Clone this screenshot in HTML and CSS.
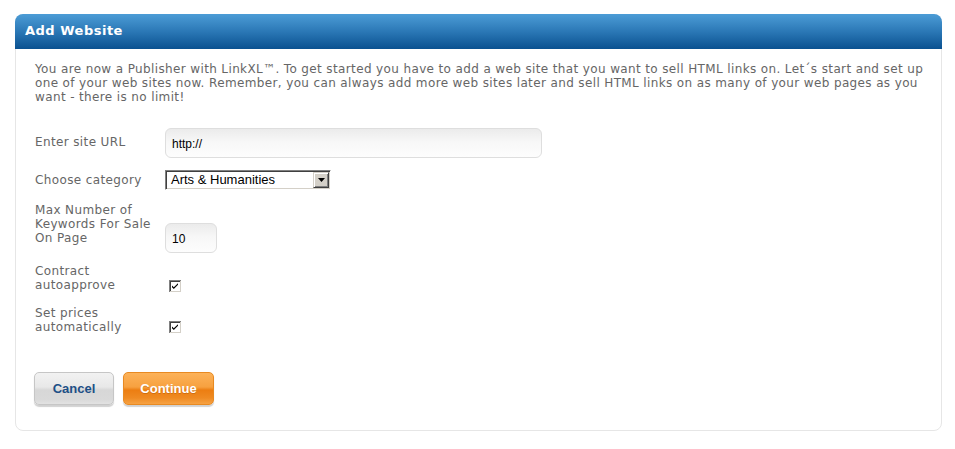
FILE: index.html
```html
<!DOCTYPE html>
<html>
<head>
<meta charset="utf-8">
<title>Add Website</title>
<link rel="stylesheet" href="styles.css">
</head>
<body>
<div class="panel">
  <div class="panel-head">Add Website</div>
  <div class="panel-body">
    <p class="intro">You are now a Publisher with LinkXL™. To get started you have to add a web site that you want to sell HTML links on. Let´s start and set up<br>one of your web sites now. Remember, you can always add more web sites later and sell HTML links on as many of your web pages as you<br>want - there is no limit!</p>
    <form class="form">
      <div class="row row-url">
        <label class="lbl">Enter site URL</label>
        <input class="txt txt-url" type="text" value="http://">
      </div>
      <div class="row row-cat">
        <label class="lbl">Choose category</label>
        <div class="select">
          <span class="select-val">Arts &amp; Humanities</span>
          <span class="select-btn"><svg width="7" height="4" viewBox="0 0 7 4"><path d="M0 0h7L3.5 4z" fill="#000"/></svg></span>
        </div>
      </div>
      <div class="row row-max">
        <label class="lbl">Max Number of<br>Keywords For Sale<br>On Page</label>
        <input class="txt txt-num" type="text" value="10">
      </div>
      <div class="row row-chk1">
        <label class="lbl">Contract<br>autoapprove</label>
        <span class="chk"><svg width="12" height="12" viewBox="0 0 12 12"><rect x="0" y="0" width="12" height="12" fill="#808080"/><rect x="1" y="1" width="11" height="11" fill="#fff"/><rect x="1" y="1" width="10" height="10" fill="#404040"/><rect x="2" y="2" width="9" height="9" fill="#fff"/><rect x="11" y="1" width="1" height="11" fill="#d4d0c8"/><rect x="1" y="11" width="11" height="1" fill="#d4d0c8"/><path d="M3 5.5l1.8 1.8L9 3.2v1.6L4.8 9 3 7.2z" fill="#000"/></svg></span>
      </div>
      <div class="row row-chk2">
        <label class="lbl">Set prices<br>automatically</label>
        <span class="chk"><svg width="12" height="12" viewBox="0 0 12 12"><rect x="0" y="0" width="12" height="12" fill="#808080"/><rect x="1" y="1" width="11" height="11" fill="#fff"/><rect x="1" y="1" width="10" height="10" fill="#404040"/><rect x="2" y="2" width="9" height="9" fill="#fff"/><rect x="11" y="1" width="1" height="11" fill="#d4d0c8"/><rect x="1" y="11" width="11" height="1" fill="#d4d0c8"/><path d="M3 5.5l1.8 1.8L9 3.2v1.6L4.8 9 3 7.2z" fill="#000"/></svg></span>
      </div>
      <div class="actions">
        <button type="button" class="btn btn-cancel">Cancel</button>
        <button type="button" class="btn btn-continue">Continue</button>
      </div>
    </form>
  </div>
</div>
</body>
</html>
```
FILE: styles.css
```css
html, body {
  margin: 0;
  padding: 0;
  background: #fff;
}
body {
  padding: 14px 0 0 15px;
  font-family: "DejaVu Sans", Verdana, sans-serif;
}
.panel {
  width: 925px;
  height: 415px;
  border: 1px solid #e6e6e6;
  border-radius: 8px;
  background: #fff;
}
.panel-head {
  margin: -1px -1px 0 -1px;
  height: 35px;
  border-radius: 8px 8px 0 0;
  background: linear-gradient(#4c9cd6 0%, #2b78b6 50%, #0a5190 100%);
  color: #fff;
  font-weight: bold;
  font-size: 13px;
  letter-spacing: 0.5px;
  line-height: 34px;
  padding-left: 10px;
}
.panel-body {
  padding: 13px 0 0 19px;
}
.intro {
  margin: 0;
  font-size: 12px;
  line-height: 14px;
  letter-spacing: 0.37px;
  color: #666;
  white-space: nowrap;
}
.form {
  margin-top: 24px;
}
.row {
  display: flex;
  align-items: flex-start;
}
.lbl {
  width: 130px;
  font-size: 12px;
  line-height: 14px;
  letter-spacing: 0.37px;
  color: #666;
  white-space: nowrap;
}
.txt {
  box-sizing: border-box;
  height: 30px;
  margin: 0;
  border: 1px solid #dedede;
  border-radius: 6px;
  background: linear-gradient(#ebebeb 0%, #f7f7f7 45%, #fdfdfd 100%);
  font-family: "Liberation Sans", Arial, sans-serif;
  font-size: 12px;
  color: #000;
  padding: 2px 0 0 6px;
  outline: none;
}
.txt-url { width: 377px; }
.txt-num { width: 52px; margin-top: 20px; }
.row-url .lbl { margin-top: 7px; }
.row-cat { margin-top: 12px; }
.row-cat .lbl { margin-top: 3px; }
.select {
  box-sizing: border-box;
  width: 166px;
  height: 20px;
  display: flex;
  align-items: center;
  border-style: solid;
  border-width: 1px;
  border-color: #808080 #fff #fff #808080;
  box-shadow: inset 1px 1px 0 #404040, inset -1px -1px 0 #d4d0c8;
  background: #fff;
  padding: 1px 1px 1px 5px;
}
.select-val {
  flex: 1;
  font-family: "Liberation Sans", Arial, sans-serif;
  font-size: 13px;
  color: #000;
  line-height: 16px;
}
.select-btn {
  box-sizing: border-box;
  width: 16px;
  height: 16px;
  background: #d4d0c8;
  border-style: solid;
  border-width: 1px;
  border-color: #d4d0c8 #404040 #404040 #d4d0c8;
  box-shadow: inset 1px 1px 0 #fff, inset -1px -1px 0 #808080;
  display: flex;
  align-items: center;
  justify-content: center;
}
.select-btn svg { display: block; }
.row-max { margin-top: 13px; }
.row-chk1 { margin-top: 11px; }
.row-chk2 { margin-top: 14px; }
.chk {
  display: block;
  margin-left: 4px;
  width: 12px;
  height: 12px;
}
.chk svg { display: block; }
.row-chk1 .chk { margin-top: 16px; }
.row-chk2 .chk { margin-top: 15px; }
.actions {
  display: flex;
  gap: 9px;
  margin-top: 38px;
  margin-left: -1px;
}
.btn {
  box-sizing: border-box;
  height: 33px;
  border-radius: 5px;
  font-family: "Liberation Sans", Arial, sans-serif;
  font-weight: bold;
  font-size: 13px;
  cursor: pointer;
  padding: 0;
}
.btn-cancel {
  width: 80px;
  border: 1px solid #c6c6c6;
  color: #1d4f86;
  background: linear-gradient(#f2f2f2 0%, #e8e8e8 45%, #d7d7d7 55%, #d9d9d9 85%, #e2e2e2 100%);
  box-shadow: 0 2px 1px rgba(0,0,0,0.18);
}
.btn-continue {
  width: 91px;
  border: 1px solid #e88a22;
  color: #fff;
  text-shadow: 0 1px 0 rgba(150,70,0,0.35);
  background: linear-gradient(#fcb259 0%, #f7a140 45%, #ec7e12 55%, #ef8a22 80%, #f6a244 100%);
  box-shadow: 0 2px 1px rgba(0,0,0,0.18);
}
```
